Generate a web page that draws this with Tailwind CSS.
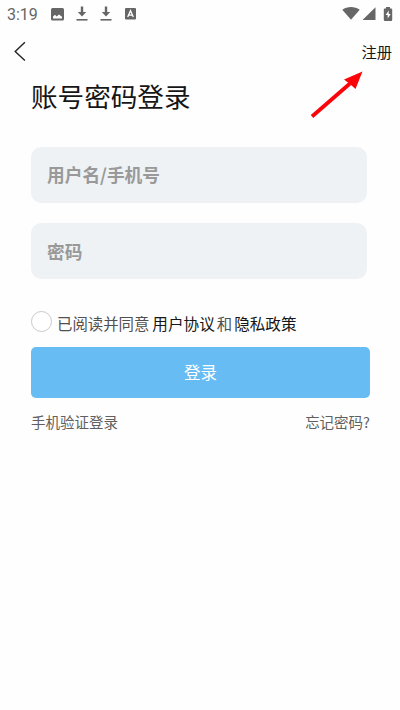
<!DOCTYPE html>
<html lang="zh-CN">
<head>
<meta charset="UTF-8">
<meta name="viewport" content="width=device-width, initial-scale=1">
<title>账号密码登录</title>
<script src="https://cdn.jsdelivr.net/npm/@tailwindcss/browser@4"></script>
</head>
<body class="bg-white">
<main class="relative h-[710px] w-[400px] overflow-hidden bg-[#fefefe] font-['Noto_Sans_CJK_SC',sans-serif] text-[#161616]">
  <header class="flex h-7 items-center pl-[7px] pr-[7px] text-[#666]">
    <span class="w-[44px] pt-px font-[Roboto,sans-serif] text-[16px] leading-7">3:19</span>
    <svg class="h-[13px] w-[13px]" viewBox="0 0 13 13"><rect width="13" height="12.500" rx="1.5" fill="currentColor"/><path d="M2 10.500V8.600l2-1.800 1.600 1.600L8 6.400l3 2.300v1.800z" fill="#fff"/></svg>
    <svg class="ml-[12px] h-[16px] w-[12px]" viewBox="0 0 12 16" fill="currentColor"><path d="M4.800.5h2.400V6h3L6 10.500 1.800 6h3z"/><path d="M.5 13h11v1.600H.5z"/></svg>
    <svg class="ml-[12px] h-[16px] w-[12px]" viewBox="0 0 12 16" fill="currentColor"><path d="M4.800.5h2.400V6h3L6 10.500 1.800 6h3z"/><path d="M.5 13h11v1.600H.5z"/></svg>
    <svg class="ml-[13px] h-[12px] w-[11px]" viewBox="0 0 11 12"><rect width="11" height="11.500" rx="1" fill="currentColor"/><path d="M2.700 9 5.500 2.700 8.300 9M3.700 7.200h3.600" fill="none" stroke="#fff" stroke-width="1.300"/></svg>
    <svg class="ml-auto h-[14px] w-[18px]" viewBox="0 0 18 14"><path d="M.3 2.700C5.300-.9 12.700-.9 17.700 2.700L9 12.800z" fill="currentColor"/></svg>
    <svg class="ml-[2px] h-[14px] w-[14px]" viewBox="0 0 14 14"><path d="M13.500.2V13H.5z" fill="currentColor"/></svg>
    <svg class="ml-[7px] h-[15px] w-[10px]" viewBox="0 0 10 15"><path d="M3 0h4v1.400h1.200q1 0 1 1v10.600q0 1-1 1H1.800q-1 0-1-1V2.400q0-1 1-1H3z" fill="currentColor"/><path d="M5.700 3.500 2.700 8h2v3.500l3-4.600h-2z" fill="#fff"/></svg>
  </header>
  <nav class="flex h-[46px] items-center justify-between pl-[14px] pr-[8px]">
    <svg class="h-5 w-3" viewBox="0 0 12 20" fill="none" stroke="#222" stroke-width="1.400"><path d="M10.900 1.200 1.200 10.600l9.700 8.900"/></svg>
    <a class="text-[15.300px] leading-6">注册</a>
  </nav>
  <section class="pl-[31px] pr-[30px]">
    <h1 class="h-[72.500px] pt-[2px] text-[26.600px] leading-[40px]">账号密码登录</h1>
    <div class="mr-[3.500px] flex h-[56px] items-center rounded-[10px] bg-[#eef2f5] pl-[16px] text-[17.700px] font-bold text-[#999]">用户名/手机号</div>
    <div class="mr-[3.500px] mt-[20.500px] flex h-[56px] items-center rounded-[10px] bg-[#eef2f5] pl-[16px] text-[17.700px] font-bold text-[#999]">密码</div>
    <div class="mt-[31px] flex h-[22px] items-center text-[15.400px] leading-[22px]">
      <span class="h-[21px] w-[21px] shrink-0 rounded-full border border-[#c9c9c9] bg-white"></span>
      <div class="flex pl-[5px] pt-[4px] text-[#505050]"><span>已阅读并同意</span><span class="ml-[3px] text-[15.600px] text-[#161616]">用户协议</span><span class="ml-[2px]">和</span><span class="ml-[2px] text-[15.600px] text-[#161616]">隐私政策</span></div>
    </div>
    <div class="mt-[14.600px] flex h-[51px] items-center justify-center rounded-[5px] bg-[#67bdf3] text-[16.500px] text-white">登录</div>
    <div class="mt-[13.400px] flex justify-between text-[14.500px] leading-[22px] text-[#606060]"><span>手机验证登录</span><span>忘记密码?</span></div>
  </section>
  <svg class="absolute left-[308px] top-[68px] h-[52px] w-[58px]" viewBox="0 0 58 52"><path d="M4 48.500 42 15.500" stroke="#fa0509" stroke-width="3.800"/><path d="M54.500 3.500 47.500 21 42.500 16.500 36 11.500z" fill="#fa0509"/></svg>
</main>
</body>
</html>
